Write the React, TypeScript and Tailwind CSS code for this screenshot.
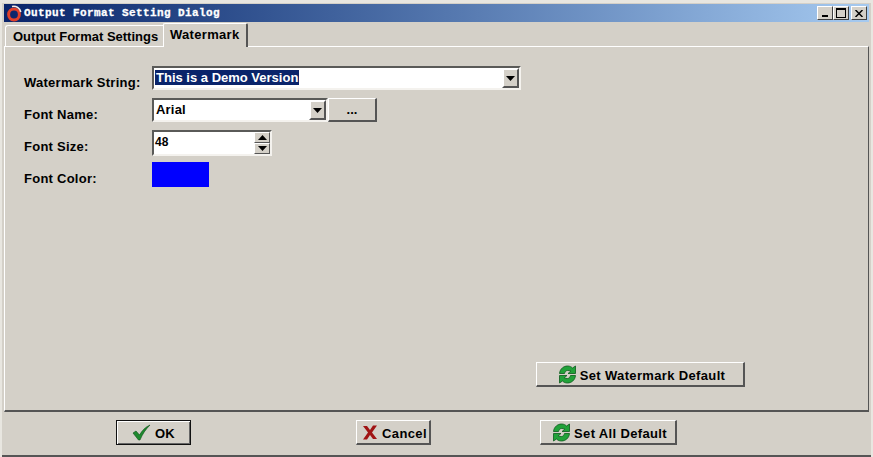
const raised = "border border-t-white border-l-white border-r-[#404040] border-b-[#404040] bg-[#d4d0c8]";
const raised2 = "border border-b-2 border-r-2 border-t-white border-l-white border-r-[#555] border-b-[#555] bg-[#d4d0c8]";
const sunken = "border-2 border-t-[#5a5a58] border-l-[#5a5a58] border-r-[#f4f2ee] border-b-[#f4f2ee]";

function Arrow({ up = false }: { up?: boolean }) {
  return (
    <svg width="9" height="5" viewBox="0 0 9 5">
      <path d={up ? "M4.5 0 L9 5 H0 Z" : "M0 0 H9 L4.5 5 Z"} fill="#000" />
    </svg>
  );
}

function DropButton() {
  return (
    <div className="w-[17px] h-[20px] flex items-center justify-center border-2 border-t-white border-l-white border-r-[#555] border-b-[#555] bg-[#d4d0c8]">
      <Arrow />
    </div>
  );
}

function RefreshIcon() {
  return (
    <svg className="mt-[1px]" width="19" height="19" viewBox="0 0 19 19">
      <path d="M1.5 8.5 C2 3.5 6 1 9.5 1 C12 1 13.5 2 14.5 3 L17.5 1 V8.5 H10 L12.8 6.2 C11.5 5.5 10.5 5.5 9.5 5.5 C8 5.5 7 6.8 6.5 8.5 Z" fill="#22a23a" stroke="#0b5a1c" strokeWidth="0.8" />
      <path d="M17.5 10.5 C17 15.5 13 18 9.5 18 C7 18 5.5 17 4.5 16 L1.5 18 V10.5 H9 L6.2 12.8 C7.5 13.5 8.5 13.5 9.5 13.5 C11 13.5 12 12.2 12.5 10.5 Z" fill="#22a23a" stroke="#0b5a1c" strokeWidth="0.8" />
    </svg>
  );
}

function Row({ label, children }: { label: string; children: React.ReactNode }) {
  return (
    <div className="flex items-start h-[32px]">
      <div className="w-[128px] pt-[9px] text-[13px] leading-[16px] tracking-[0.25px]">{label}</div>
      {children}
    </div>
  );
}

export default function App() {
  return (
    <div
      className="w-[873px] h-[457px] overflow-hidden flex flex-col bg-[#d4d0c8] text-black border-t-[3px] border-x-[2px] border-t-[#e8e6e0] border-x-[#e8e6e0] text-[13px] font-bold"
      style={{ fontFamily: '"Liberation Sans", Arial, sans-serif' }}
    >
      {/* title bar */}
      <div className="h-[18px] mx-[2px] mt-[1px] flex items-center bg-gradient-to-r from-[#0a246a] to-[#a6caf0] pr-[2px]">
        <svg className="ml-[2px] mr-[2px]" width="16" height="17" viewBox="0 0 16 17">
          <circle cx="8" cy="9.5" r="5.4" fill="none" stroke="#e0402a" strokeWidth="3" />
          <path d="M6 1.5 C10 0.5 14 3 14.8 7" fill="none" stroke="#f8ece6" strokeWidth="1.6" />
        </svg>
        <span className="text-white text-[11px] tracking-[0.4px] [-webkit-text-stroke:0.3px_white]" style={{ fontFamily: '"Liberation Mono", monospace' }}>
          Output Format Setting Dialog
        </span>
        <div className="ml-auto flex items-center">
          <div className={`${raised} w-[16px] h-[14px] flex items-end justify-center pb-[2px]`}>
            <div className="w-[6px] h-[2px] bg-black" />
          </div>
          <div className={`${raised} w-[16px] h-[14px] flex items-center justify-center`}>
            <div className="w-[10px] h-[10px] border border-black border-t-2" />
          </div>
          <div className={`${raised} w-[16px] h-[14px] ml-[2px] flex items-center justify-center`}>
            <svg width="8" height="7" viewBox="0 0 8 7">
              <path d="M0.5 0 L7.5 7 M7.5 0 L0.5 7" stroke="#000" strokeWidth="1.5" />
            </svg>
          </div>
        </div>
      </div>

      {/* tabs */}
      <div className="h-[24px] flex items-end pl-[3px]">
        <div className="h-[21px] w-[158px] pl-[7px] pt-[3px] leading-[16px] text-[13px] whitespace-nowrap border-t border-l border-white rounded-tl-[3px]">
          Output Format Settings
        </div>
        <div className="relative z-10 -mb-[1px] h-[24px] w-[85px] pl-[6px] pt-[3px] leading-[16px] text-[13px] tracking-[0.3px] bg-[#d4d0c8] border-t border-l border-t-white border-l-white border-r-2 border-r-[#555] rounded-t-[2px]">
          Watermark
        </div>
      </div>

      {/* tab panel */}
      <div className="h-[366px] mx-[2px] flex flex-col border border-t-white border-l-white border-r-[#555] border-b-2 border-b-[#555] pl-[19px] pt-[19px]">
        <Row label="Watermark String:">
          <div className={`${sunken} w-[369px] h-[24px] bg-white flex items-center justify-between`}>
            <span className="ml-[1px] mb-[2px] px-[1px] bg-[#0a246a] text-white text-[13px] leading-[15px]">This is a Demo Version</span>
            <DropButton />
          </div>
        </Row>
        <Row label="Font Name:">
          <div className={`${sunken} w-[176px] h-[24px] bg-white flex items-center justify-between`}>
            <span className="ml-[2px] text-[13px] tracking-[0.2px]">Arial</span>
            <DropButton />
          </div>
          <div className={`${raised2} w-[49px] h-[24px] flex items-center justify-center`}>...</div>
        </Row>
        <Row label="Font Size:">
          <div className={`${sunken} w-[120px] h-[26px] bg-white flex items-center justify-between`}>
            <span className="ml-[1px] mb-[3px] text-[12px]">48</span>
            <div className="w-[16px] h-[22px] flex flex-col">
              <div className="h-[11px] flex items-center justify-center border border-t-white border-l-white border-r-[#555] border-b-[#555] bg-[#d4d0c8]"><Arrow up /></div>
              <div className="h-[11px] flex items-center justify-center border border-t-white border-l-white border-r-[#555] border-b-[#555] bg-[#d4d0c8]"><Arrow /></div>
            </div>
          </div>
        </Row>
        <Row label="Font Color:">
          <div className="w-[57px] h-[25px] bg-[#0000ff]" />
        </Row>

        <div className="mt-auto mb-[23px] ml-[512px]">
          <div className={`${raised2} w-[209px] h-[25px] pl-[3px] flex items-center justify-center gap-[3px] text-[13px] tracking-[0.35px]`}>
            <RefreshIcon />
            <span className="mt-[3px]">Set Watermark Default</span>
          </div>
        </div>
      </div>

      {/* footer buttons */}
      <div className="flex-1 flex items-start pt-[8px] border-b-2 border-b-[#555]">
        <div className="ml-[114px] w-[75px] h-[25px] flex items-center justify-center gap-[4px] border border-[#111] bg-[#d4d0c8] shadow-[inset_1px_1px_0_#fff,inset_-1px_-1px_0_#666] text-[13px] tracking-[0.2px]">
          <svg width="19" height="17" viewBox="0 0 19 17">
            <path d="M1 9 L4 7 L7.5 11 C10 6.5 13.5 3 18 1 C13.5 5.5 10.5 10 8 16 H6.5 Z" fill="#1f8a2f" stroke="#0b4f18" strokeWidth="0.6" />
          </svg>
          <span className="mt-[3px]">OK</span>
        </div>
        <div className={`${raised2} ml-[165px] w-[75px] h-[25px] pl-[3px] flex items-center justify-center gap-[4px] text-[13px] tracking-[0.4px]`}>
          <svg className="mt-[1px]" width="16" height="15" viewBox="0 0 16 15">
            <path d="M1 1 H5 L8 5 L11 0.5 H15 L10 7.5 L15 14 H11 L8 10 L5 14.5 H1 L6 7.5 Z" fill="#a01414" />
          </svg>
          <span className="mt-[3px]">Cancel</span>
        </div>
        <div className={`${raised2} ml-[109px] w-[137px] h-[25px] pl-[3px] flex items-center justify-center gap-[3px] text-[13px] tracking-[0.35px]`}>
          <RefreshIcon />
          <span className="mt-[3px]">Set All Default</span>
        </div>
      </div>
    </div>
  );
}
